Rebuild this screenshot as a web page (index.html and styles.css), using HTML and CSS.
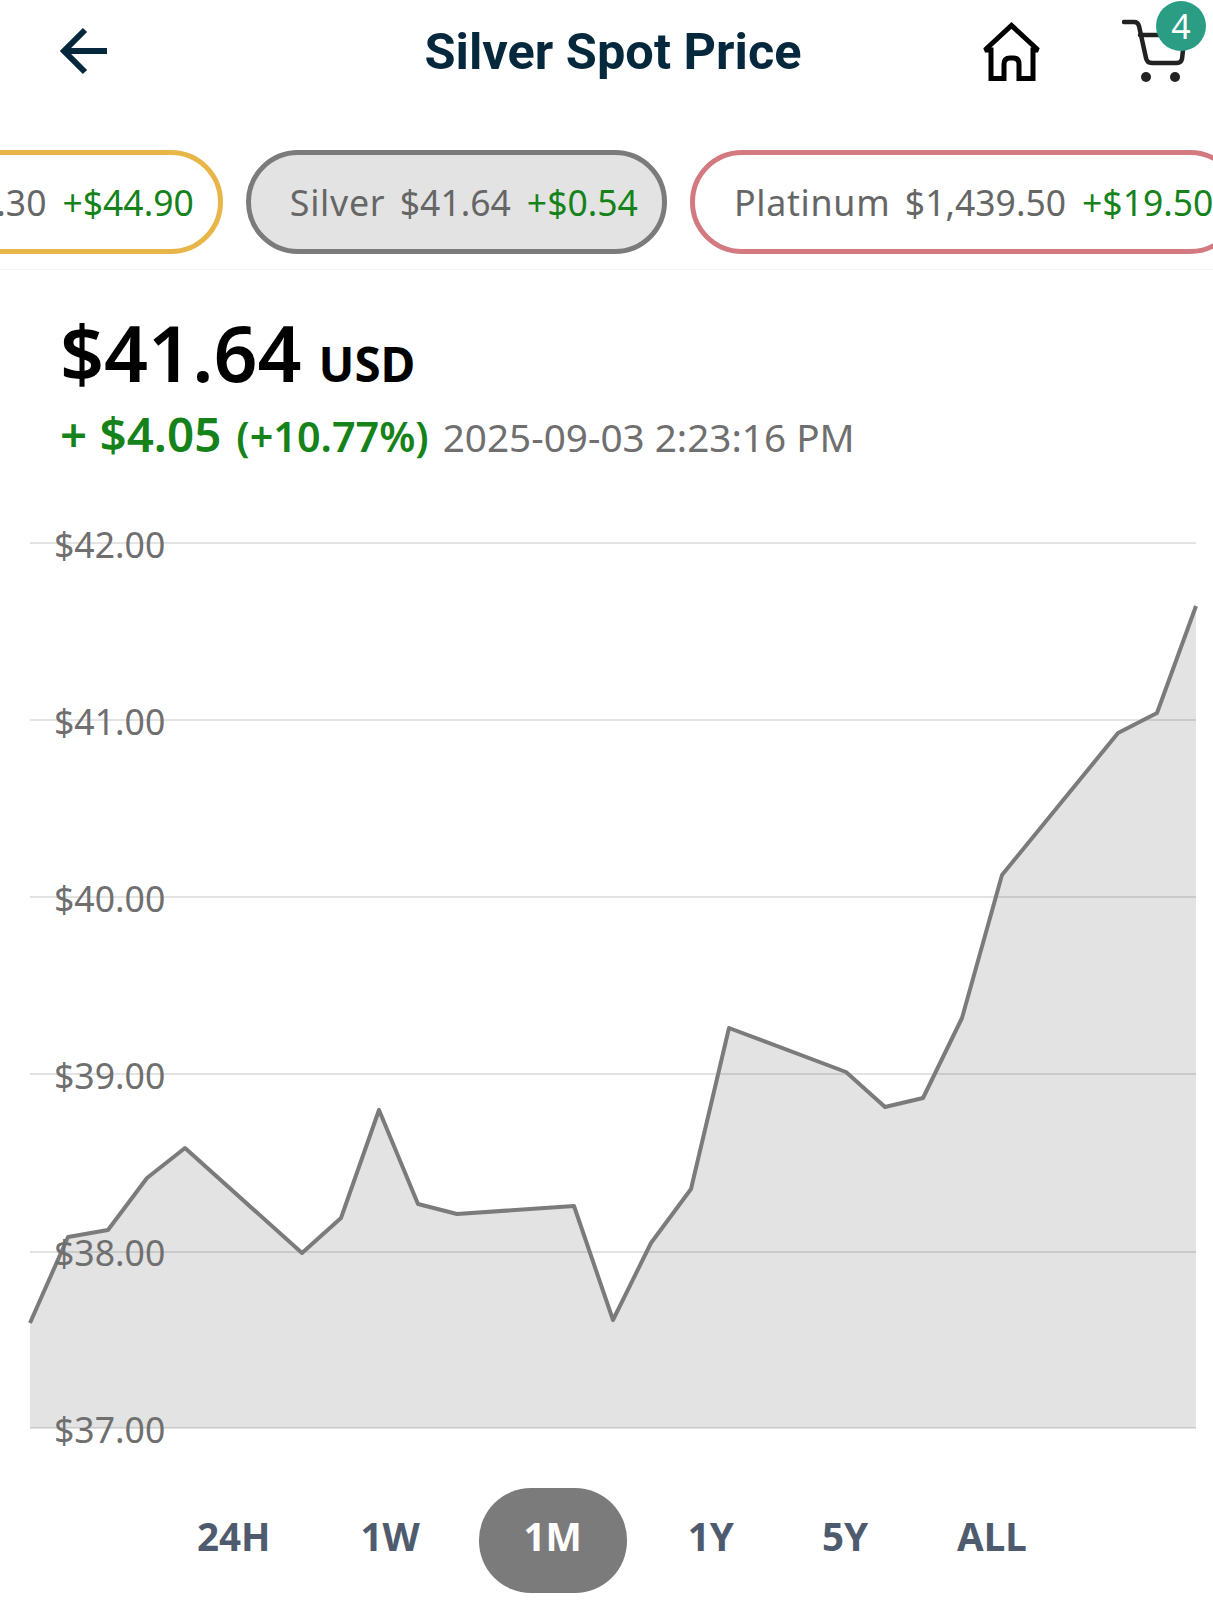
FILE: index.html
```html
<!DOCTYPE html>
<html lang="en">
<head>
<meta charset="utf-8">
<title>Silver Spot Price</title>
<link rel="stylesheet" href="styles.css">
</head>
<body>
<main class="page">
  <header class="topbar">
    <svg class="icon-back" viewBox="0 0 48 48" aria-hidden="true"><path d="M47 24H4M25 3 4 24l21 21"/></svg>
    <h1 class="title">Silver Spot Price</h1>
    <svg class="icon-home" viewBox="0 0 64 60" aria-hidden="true"><path d="M11 56.500V28H5L31.500 3.500 58 28H53V56.500H39V42q0-6-6-6h-3q-6 0-6 6v14.500Z"/></svg>
    <div class="cart">
      <svg class="icon-cart" viewBox="0 0 64 64" aria-hidden="true">
        <path class="cart-line" d="M2 3h10q4 0 5 4l7 32q1 5 6 5h25q4 0 5-4l1-9M18 16h38"/>
        <circle cx="24" cy="58" r="5"/><circle cx="53" cy="58" r="5"/>
      </svg>
      <span class="badge">4</span>
    </div>
  </header>

  <nav class="tickers">
    <div class="ticker gold"><span class="t-name">Gold</span><span class="t-price">$3,590.30</span><span class="t-up">+$44.90</span></div>
    <div class="ticker silver"><span class="t-name">Silver</span><span class="t-price">$41.64</span><span class="t-up">+$0.54</span></div>
    <div class="ticker platinum"><span class="t-name">Platinum</span><span class="t-price">$1,439.50</span><span class="t-up">+$19.50</span></div>
  </nav>

  <section class="summary">
    <div class="quote"><span class="price">$41.64</span><span class="cur">USD</span></div>
    <div class="change"><span class="chg-abs">+ $4.05</span><span class="chg-pct">(+10.77%)</span><span class="stamp">2025-09-03 2:23:16 PM</span></div>
  </section>

  <svg class="chart" viewBox="0 0 1213 960" aria-label="Silver price chart">
    <path class="area" d="M30 793L68 707 108 700 147 648 185 618 302 723 341 688 379 580 418 674 457 684 574 676 613 790 651 713 691 659 729 498 846 542 885 577 923 568 962 488 1002 345 1118 203 1157 183 1196 76V898H30Z"/>
    <g class="grid">
      <line x1="30" x2="1196" y1="13" y2="13"/>
      <line x1="30" x2="1196" y1="190" y2="190"/>
      <line x1="30" x2="1196" y1="367" y2="367"/>
      <line x1="30" x2="1196" y1="544" y2="544"/>
      <line x1="30" x2="1196" y1="722" y2="722"/>
      <line x1="30" x2="1196" y1="898" y2="898"/>
    </g>
    <path class="line" d="M30 793L68 707 108 700 147 648 185 618 302 723 341 688 379 580 418 674 457 684 574 676 613 790 651 713 691 659 729 498 846 542 885 577 923 568 962 488 1002 345 1118 203 1157 183 1196 76"/>
    <g class="ylabels">
      <text x="54" y="28">$42.00</text>
      <text x="54" y="205">$41.00</text>
      <text x="54" y="382">$40.00</text>
      <text x="54" y="559">$39.00</text>
      <text x="54" y="736">$38.00</text>
      <text x="54" y="913">$37.00</text>
    </g>
  </svg>

  <div class="ranges">
    <span class="range r-24h">24H</span>
    <span class="range r-1w">1W</span>
    <span class="range active">1M</span>
    <span class="range r-1y">1Y</span>
    <span class="range r-5y">5Y</span>
    <span class="range r-all">ALL</span>
  </div>
</main>
</body>
</html>
```
FILE: styles.css
```css
* { box-sizing: border-box; }
html, body { margin: 0; background: #fff; }
body { font-family: "Noto Sans", "Open Sans", sans-serif; overflow: hidden; }
.page { width: 1213px; height: 1600px; overflow: hidden; }

.topbar { height: 104px; position: relative; display: flex; align-items: center; }
.icon-back { width: 48px; height: 48px; margin-left: 60px; margin-top: -2px; fill: none; stroke: #06283d; stroke-width: 6; }
.title { position: absolute; left: 0; right: 0; top: 21px; margin: 0; text-align: center; font-family: Roboto, sans-serif; font-weight: 700; font-size: 50.500px; line-height: 62px; color: #06283d; padding-left: 13px; }
.icon-home { width: 64px; height: 60px; margin-left: 872px; fill: none; stroke: #000; stroke-width: 5; stroke-miterlimit: 2; }
.cart { position: absolute; left: 1120px; top: 0; width: 93px; height: 90px; }
.icon-cart { position: absolute; left: 2px; top: 19px; width: 64px; height: 64px; }
.cart-line { fill: none; stroke: #222; stroke-width: 4.500; stroke-linecap: round; stroke-linejoin: round; }
.icon-cart circle { fill: #222; }
.badge { position: absolute; left: 36px; top: 1px; width: 50px; height: 50px; border-radius: 50%; background: #2a9d84; color: #fff; font-size: 34px; line-height: 50px; text-align: center; }

.tickers { display: flex; gap: 23px; margin-top: 46px; margin-left: -255px; height: 120px; padding-bottom: 16px; width: 1700px; border-bottom: 1px solid #f3f3f3; }
.ticker { flex: none; height: 104px; border-radius: 52px; border: 5px solid; display: flex; align-items: center; gap: 16px; padding: 0 24px 0 39px; font-size: 35.500px; color: #666; background: #fff; }
.t-name { font-size: 35.800px; letter-spacing: 0.700px; margin-right: -1.500px; }
.gold { border-color: #e8b548; }
.silver { border-color: #7b7b7b; background: #e3e3e3; }
.platinum { border-color: #d27a80; }
.t-up { color: #15821a; }

.summary { padding: 33px 0 0 60px; }
.quote { display: flex; align-items: baseline; gap: 17px; height: 100px; }
.price { font-size: 77px; font-weight: 600; line-height: 100px; color: #000; }
.cur { font-size: 47.500px; font-weight: 700; color: #000; }
.change { display: flex; align-items: baseline; margin-top: 1px; height: 60px; line-height: 60px; }
.chg-abs { font-size: 47.500px; font-weight: 600; color: #15821a; }
.chg-pct { font-size: 41.300px; font-weight: 600; color: #15821a; margin-left: 15px; }
.stamp { font-size: 38.700px; color: #6f6f6f; margin-left: 14px; }

.chart { display: block; width: 1213px; height: 960px; margin-top: 66px; }
.grid line { stroke: rgba(0, 0, 0, 0.11); stroke-width: 2; }
.area { fill: #e3e3e3; }
.line { fill: none; stroke: #7b7b7b; stroke-width: 4; stroke-linejoin: round; }
.ylabels text { font-family: "Noto Sans", sans-serif; font-size: 35.600px; fill: #6f6f6f; }

.ranges { position: relative; height: 105px; margin-top: -2px; display: flex; align-items: center; padding-left: 197px; font-weight: 700; font-size: 38.500px; color: #4e5b6e; }
.range { display: block; padding-bottom: 10px; }
.r-1w { margin-left: 90px; }
.active { margin-left: 59px; background: #7b7b7b; color: #fff; width: 148px; height: 105px; border-radius: 52px; display: flex; align-items: center; justify-content: center; }
.r-1y { margin-left: 61px; }
.r-5y { margin-left: 88px; }
.r-all { margin-left: 89px; }
```
